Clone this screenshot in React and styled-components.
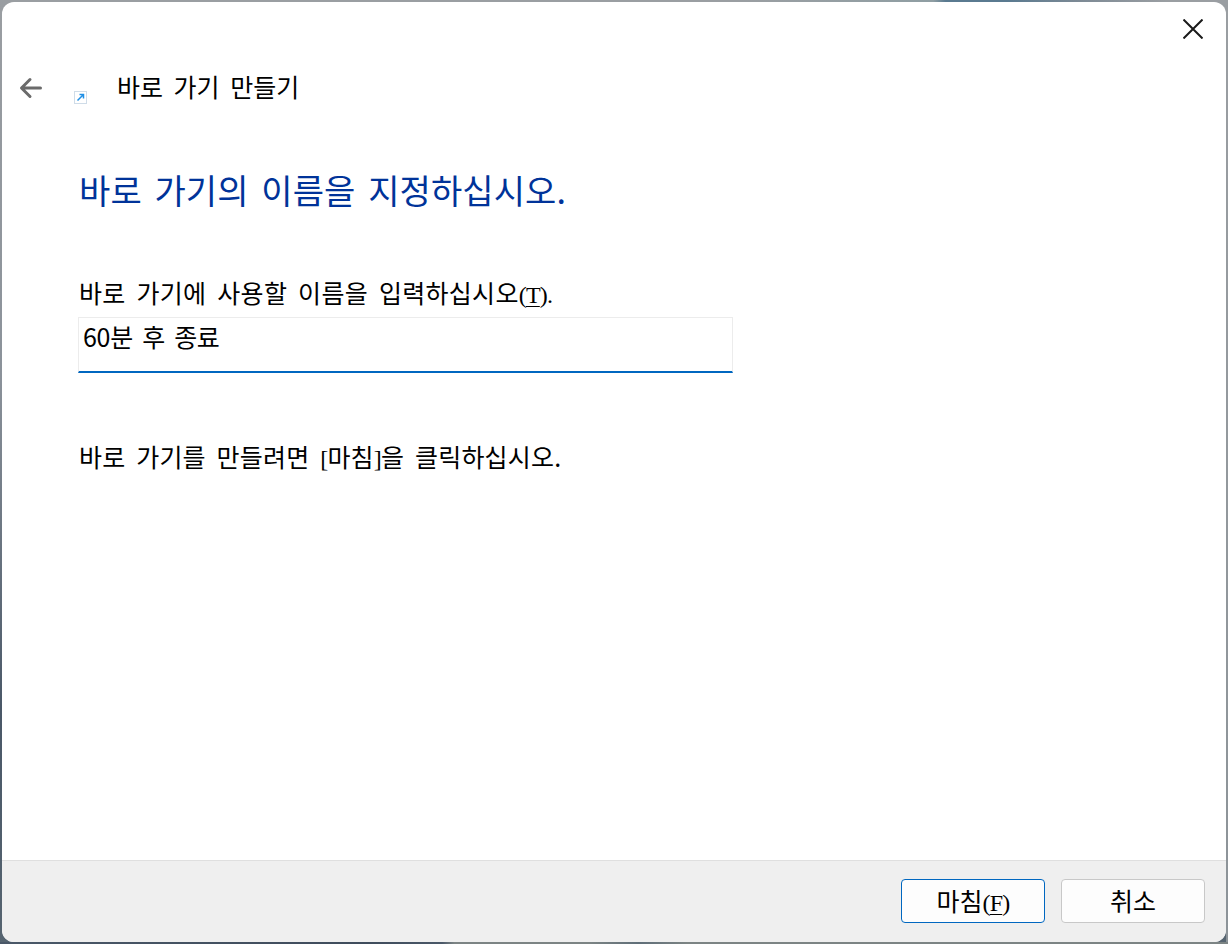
import React from 'react';
import styled, {createGlobalStyle} from 'styled-components';

const GlobalStyle = createGlobalStyle`
  html, body {
    margin: 0;
    padding: 0;
  }

  body {
    font-family: "Noto Sans CJK KR", "Noto Sans", sans-serif;
    color: #000;
  }
`;

// the desktop that shows round the window edge
const Desktop = styled.div`
  box-sizing: border-box;
  width: 1228px;
  height: 944px;
  padding: 2px;
  background:
    linear-gradient(90deg, #9a9ea2 0%, #9a9ea2 60%, #8f9ea3 76%, #5a7a90 77%, #5a7a90 82%, #7d8a95 88%, #9a9ea2 95%) top / 100% 2px no-repeat,
    linear-gradient(90deg, #4a5868 0%, #3f4c5c 30%, #4a5868 36%, #7c8484 37%, #7c8484 48%, #5f6e78 52%, #7c8484 56%, #7c8484 100%) bottom / 100% 2px no-repeat,
    linear-gradient(180deg, #9a9ea2 0%, #8c9398 100%) right / 2px 100% no-repeat,
    linear-gradient(180deg, #9a9ea2 0%, #8b929a 40%, #4a5868 75%, #566470 100%);
`;

const Window = styled.div`
  display: flex;
  flex-direction: column;
  height: 100%;
  overflow: hidden;
  border-radius: 12px;
  background: #fff;
`;

const TitleRow = styled.div`
  display: flex;
  justify-content: flex-end;
  height: 54px;
  padding-right: 9px;
`;

const CloseButton = styled.div`
  display: flex;
  align-items: center;
  justify-content: center;
  width: 48px;
  height: 54px;
`;

const HeaderRow = styled.div`
  display: flex;
  align-items: center;
  height: 64px;
  padding-left: 17px;
`;

const BackButton = styled.div`
  display: flex;
  width: 24px;
  margin-right: 31px;
`;

const ShortcutIcon = styled.div`
  display: flex;
  align-self: flex-end;
  margin-bottom: 16px;
  margin-right: 30px;
`;

const WindowTitle = styled.div`
  margin-bottom: 4px;
  font-size: 25px;
  line-height: 32px;
  word-spacing: 5px;
`;

const Content = styled.div`
  flex: 1;
  padding: 0 0 0 77px;
`;

const Heading = styled.div`
  margin-top: 48px;
  font-size: 34px;
  line-height: 44px;
  letter-spacing: 0.1px;
  word-spacing: 5px;
  color: #003399;
`;

const Label = styled.div`
  height: 32px;
  margin-top: 64px;
  font-size: 25px;
  line-height: 32px;
  letter-spacing: 0.3px;
  word-spacing: 5px;
`;

const Mnemonic = styled.span`
  font-family: "Liberation Serif", serif;
  font-size: 24px;
  letter-spacing: -0.8px;
  text-decoration: ${({$plain}) => ($plain ? 'none' : 'underline')};
  text-underline-offset: 3px;
  text-decoration-thickness: 1px;
`;

const NameInput = styled.div`
  box-sizing: border-box;
  width: 655px;
  height: 56px;
  margin: 9px 0 0 -1px;
  padding: 0 4px;
  border: 1px solid #ececec;
  border-bottom: 2px solid #0067c0;
  font-size: 25px;
  line-height: 36px;
  letter-spacing: -0.3px;
  word-spacing: 4px;
`;

const Hint = styled.div`
  margin-top: 67px;
  font-size: 25px;
  line-height: 32px;
  letter-spacing: 0.2px;
  word-spacing: 5px;
`;

const Footer = styled.div`
  display: flex;
  justify-content: flex-end;
  gap: 16px;
  box-sizing: border-box;
  height: 82px;
  padding: 18px 21px 0 0;
  background: #efefef;
  border-top: 1px solid #dfdfdf;
`;

const Button = styled.div`
  box-sizing: border-box;
  width: 144px;
  height: 44px;
  border: 1px solid ${({$primary}) => ($primary ? '#0067c0' : '#c8c8c8')};
  border-radius: 4px;
  background: #fdfdfd;
  font-size: 25px;
  line-height: 40px;
  text-align: center;
`;

const BackIcon = () => <svg width='24' height='24' viewBox='0 0 24 24' fill='none' stroke='#6b6b6b' strokeWidth='3' strokeLinecap='round' strokeLinejoin='round'>
  <path d='M3 12h18.500M11 3.500L2.500 12l8.500 8.500'/>
</svg>;

const CloseIcon = () => <svg width='20' height='20' viewBox='0 0 20 20' fill='none' stroke='#1a1a1a' strokeWidth='2'>
  <path d='M0.500 0.500l19 19M19.500 0.500l-19 19'/>
</svg>;

const ArrowIcon = () => <svg width='13' height='13' viewBox='0 0 13 13'>
  <rect x='0.500' y='0.500' width='12' height='12' fill='#fff' stroke='#cfdce8'/>
  <path d='M3.500 9.500L9 4M5.500 3.500h4v4' fill='none' stroke='#1e8fe6' strokeWidth='1.500'/>
</svg>;

const App = () => <Desktop>
  <GlobalStyle/>
  <Window>
    <TitleRow>
      <CloseButton><CloseIcon/></CloseButton>
    </TitleRow>
    <HeaderRow>
      <BackButton><BackIcon/></BackButton>
      <ShortcutIcon><ArrowIcon/></ShortcutIcon>
      <WindowTitle>바로 가기 만들기</WindowTitle>
    </HeaderRow>
    <Content>
      <Heading>바로 가기의 이름을 지정하십시오.</Heading>
      <Label>바로 가기에 사용할 이름을 입력하십시오<Mnemonic $plain>(</Mnemonic><Mnemonic>T</Mnemonic><Mnemonic $plain>).</Mnemonic></Label>
      <NameInput>60분 후 종료</NameInput>
      <Hint>바로 가기를 만들려면 <Mnemonic $plain>[</Mnemonic>마침<Mnemonic $plain>]</Mnemonic>을 클릭하십시오.</Hint>
    </Content>
    <Footer>
      <Button $primary>마침<Mnemonic $plain>(</Mnemonic><Mnemonic>F</Mnemonic><Mnemonic $plain>)</Mnemonic></Button>
      <Button>취소</Button>
    </Footer>
  </Window>
</Desktop>;

export default App;
